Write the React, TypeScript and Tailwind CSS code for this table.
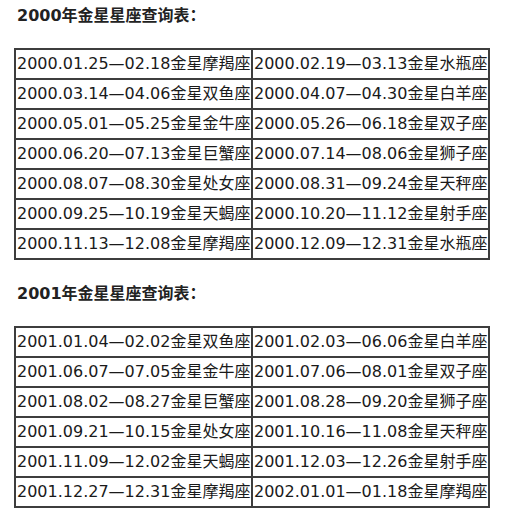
import React from 'react';

const table2000 = [
  ['2000.01.25—02.18金星摩羯座', '2000.02.19—03.13金星水瓶座'],
  ['2000.03.14—04.06金星双鱼座', '2000.04.07—04.30金星白羊座'],
  ['2000.05.01—05.25金星金牛座', '2000.05.26—06.18金星双子座'],
  ['2000.06.20—07.13金星巨蟹座', '2000.07.14—08.06金星狮子座'],
  ['2000.08.07—08.30金星处女座', '2000.08.31—09.24金星天秤座'],
  ['2000.09.25—10.19金星天蝎座', '2000.10.20—11.12金星射手座'],
  ['2000.11.13—12.08金星摩羯座', '2000.12.09—12.31金星水瓶座'],
];

const table2001 = [
  ['2001.01.04—02.02金星双鱼座', '2001.02.03—06.06金星白羊座'],
  ['2001.06.07—07.05金星金牛座', '2001.07.06—08.01金星双子座'],
  ['2001.08.02—08.27金星巨蟹座', '2001.08.28—09.20金星狮子座'],
  ['2001.09.21—10.15金星处女座', '2001.10.16—11.08金星天秤座'],
  ['2001.11.09—12.02金星天蝎座', '2001.12.03—12.26金星射手座'],
  ['2001.12.27—12.31金星摩羯座', '2002.01.01—01.18金星摩羯座'],
];

const VenusTable = ({ rows }: { rows: string[][] }) => (
  <table className="ml-[14px] w-[476px] border-collapse table-fixed">
    <tbody>
      {rows.map((row, i) => (
        <tr key={i} className="h-[30px]">
          {row.map((cell, j) => (
            <td
              key={j}
              className="border-2 border-[#3d3d3d] px-[1px] py-0 text-[16px] leading-[26px] whitespace-nowrap text-[#1a1a1a]"
            >
              {cell}
            </td>
          ))}
        </tr>
      ))}
    </tbody>
  </table>
);

const App = () => {
  return (
    <div className="w-[514px] h-[511px] overflow-hidden bg-white font-['DejaVu_Sans','Noto_Sans_CJK_SC',sans-serif]">
      <h2 className="pl-[17px] h-[32px] leading-[32px] text-[16px] font-bold text-[#222]">
        2000年金星星座查询表：
      </h2>
      <div className="mt-[16px]">
        <VenusTable rows={table2000} />
      </div>
      <h2 className="mt-[18px] pl-[17px] h-[32px] leading-[32px] text-[16px] font-bold text-[#222]">
        2001年金星星座查询表：
      </h2>
      <div className="mt-[16px]">
        <VenusTable rows={table2001} />
      </div>
    </div>
  );
};

export default App;
